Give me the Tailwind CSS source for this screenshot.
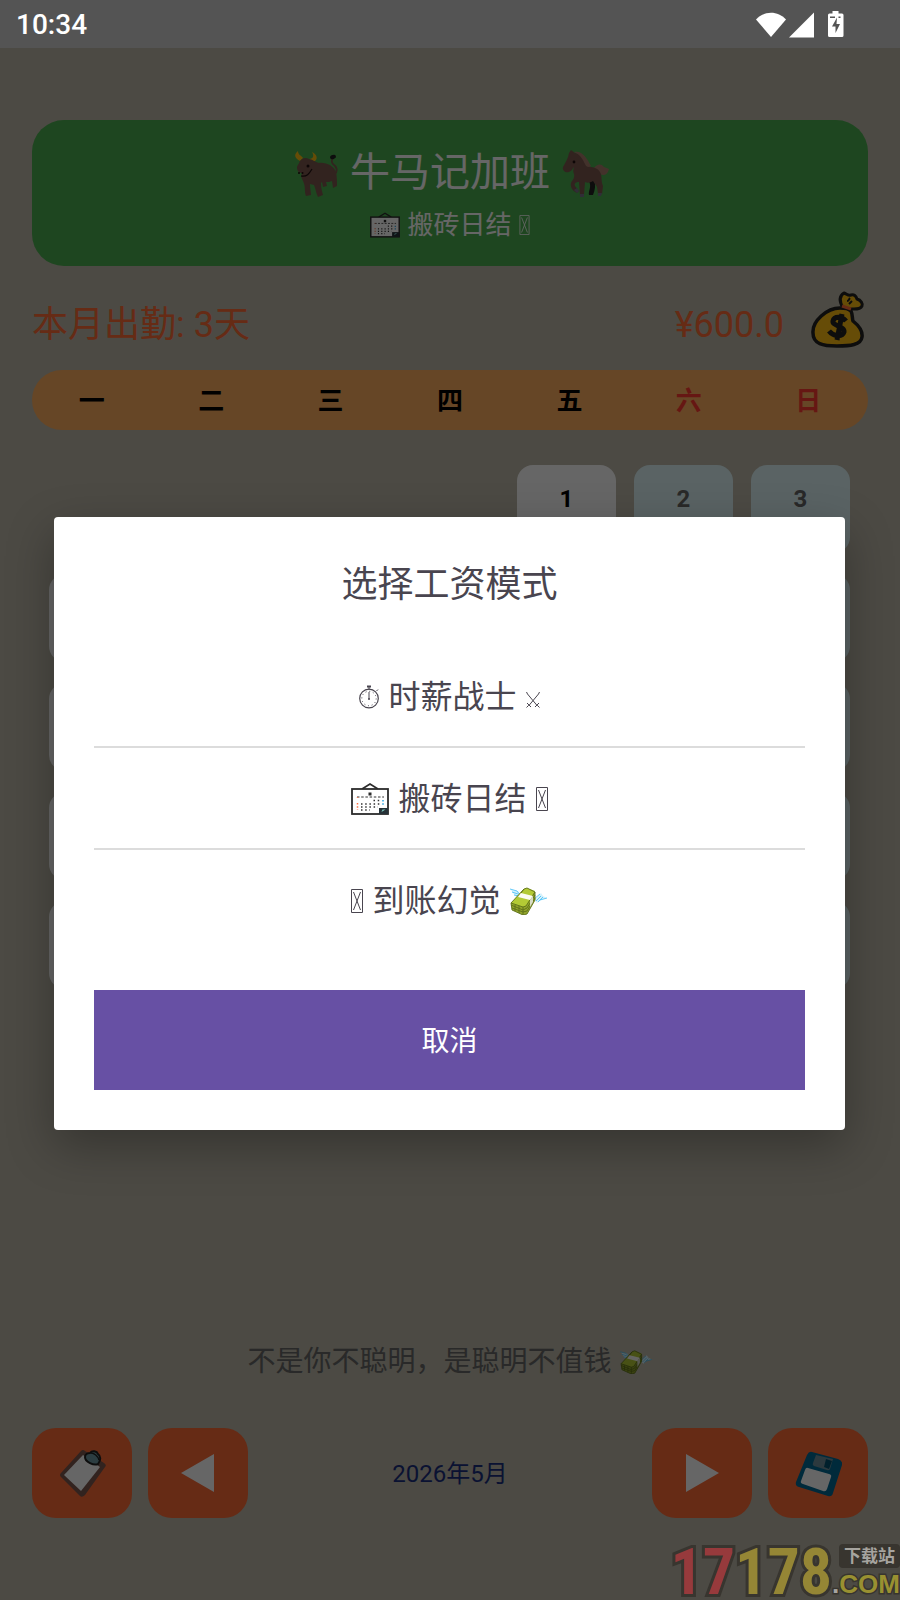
<!DOCTYPE html>
<html lang="zh-CN">
<head>
    <meta charset="UTF-8">
    <meta name="viewport" content="width=device-width, initial-scale=1.0">
    <title>牛马记加班</title>
    <script src="https://cdn.jsdelivr.net/npm/@tailwindcss/browser@4"></script>
</head>

<body class="relative min-h-screen flex flex-col bg-[#bdb9aa] font-['Roboto','Noto_Sans_CJK_SC',sans-serif]">

    <!-- Shared icons -->
    <svg class="hidden" aria-hidden="true">
        <symbol id="calendar" viewBox="0 0 38 32">
            <path d="M11 6 L19 1 L27 6" fill="none" stroke="#2b2b2b" stroke-width="1.6"/>
            <rect x="1" y="6" width="36" height="25" fill="#fff" stroke="#2b2b2b" stroke-width="1.8"/>
            <rect x="17.500" y="9.500" width="3" height="3" fill="#2b2b2b"/>
            <path d="M6 14h27" stroke="#333" stroke-width="1" stroke-dasharray="2.500 1.700"/>
            <path d="M22.500 17.500h8M10 21h21M10 24h17M10 27h9" stroke="#333" stroke-width="1.500" stroke-dasharray="1.500 2.700"/>
            <path d="M6.500 14v.8M6.500 20v7" stroke="#ff7043" stroke-width="1.500" stroke-dasharray="1.500 1.700"/>
            <path d="M32 17v6" stroke="#29a3e0" stroke-width="1.500" stroke-dasharray="1.500 1.700"/>
            <path d="M28 31v-6h9v6z" fill="#263238"/>
            <path d="M30.500 29l1-2.500h3z" fill="#80cbc4"/>
        </symbol>
        <symbol id="tofu" viewBox="0 0 12 24">
            <path d="M.5 .5h11v23H.5zM2.500 3l7 18M9.500 3l-7 18" fill="none" stroke="currentColor" stroke-width="1"/>
        </symbol>
        <symbol id="money" viewBox="0 0 38 28">
            <path d="M1 3l7 1 4 5-2 2-5-2z" fill="#d6f1fb"/>
            <path d="M0 2l7 2 3 4M2 5l6 2M4 8l5 1" fill="none" stroke="#4fc3f7" stroke-width=".9"/>
            <path d="M24 13l5-5 2-2 2 3 4 2-6 1-4 4z" fill="#d6f1fb"/>
            <path d="M24 12l6-5M26 14l5-5M28 15l5-5M30 13l7-2" fill="none" stroke="#4fc3f7" stroke-width=".9"/>
            <path d="M1 16l1 7 11 5 4-1 8-14V5z" fill="#93a52b"/>
            <path d="M1 16L14 2l3-1 8 3-9 15-3 1z" fill="#b3ca35"/>
            <path d="M1 16l12 4 3-1 9-14M1 18l12 5 4-2 8-13M2 21l11 4 4-1 8-13M13 20v8M5 18v6M9 19v7M14 2l-3 4M1 16L14 2l3-1 8 4v8l-8 14-4 1-11-5z" fill="none" stroke="#5d7019" stroke-width=".9"/>
            <path d="M11 6l12 3-3 4-12-3z" fill="#fbfbf2"/>
            <path d="M20 13l3-4v6l-3 5z" fill="#d9dcc8"/>
        </symbol>
    </svg>

    <!-- Status Bar -->
    <header class="relative z-20 h-12 px-4 pt-0.5 flex items-center justify-between bg-[#545454] text-white">
        <span class="text-[28px] leading-none font-medium">10:34</span>
        <svg class="w-[92px] h-7 mr-9" viewBox="0 0 92 28" fill="#fff" role="img" aria-label="网络与电量">
            <path d="M0 8.500C8-.5 22-.5 30 8.500L15 26z"/>
            <path d="M33 26.500L58 1.500v25z"/>
            <path d="M76.500 0h6v2.500H86a1.500 1.500 0 0 1 1.500 1.500v20.500A1.500 1.500 0 0 1 86 26H73.500a1.500 1.500 0 0 1-1.500-1.500V4a1.500 1.500 0 0 1 1.500-1.500h3z"/>
            <path d="M81 6.500l-5 9h3.500v6.500l4.500-9h-3.500z" fill="#545454"/>
            <path d="M74 5.500h5v1.500h-5zM82.500 5.500h2v1.500h-2z" fill="#545454"/>
        </svg>
    </header>

    <!-- Main Content -->
    <main class="flex-1 flex flex-col px-8 pt-18 pb-[82px]">
        <!-- Title Card -->
        <section class="h-[146px] pt-5 rounded-[32px] bg-[#4caf50] text-white flex flex-col items-center">
            <h1 class="flex items-center gap-3 text-[40px] leading-[66px]">
                <svg class="w-12 h-12" viewBox="0 0 48 48" role="img" aria-label="牛">
                    <path d="M44 26c5-4 2-9-1-11-2-2-1-5 0-6" fill="none" stroke="#7d584e" stroke-width="1.800"/>
                    <ellipse cx="43" cy="8" rx="3" ry="2" fill="#212121" transform="rotate(-20 43 8)"/>
                    <path d="M10 12C4 9 4 5 8 2c0 4 3 4 5 7zM19 10c5 0 5-4 3-7 5 2 7 8 1 10z" fill="#ffbf12"/>
                    <path d="M10 12c2-3 6-4 9-2 3 0 6 3 10 4 7-1 15 3 17 9 1 5 1 10 1 14l-4 2-1-7c-2 1-4 1-6 1l1 4-4 1-1-5-1 1c0 5 1 8 2 12l-5 2c-2-4-2-7-4-12l-4-1c0 5 1 8 1 11l-5 1c-2-5 0-9-3-15-2-3-2-6-1-8-3 0-5-2-5-6 1-3 3-4 3-8z" fill="#7d584e"/>
                    <path d="M11 27c6 1 8-2 11-7" fill="none" stroke="#211" stroke-width="1.200"/>
                    <circle cx="18" cy="17" r="1.500" fill="#211"/>
                    <circle cx="9" cy="24" r="1" fill="#211"/>
                    <circle cx="12.500" cy="24" r="1" fill="#211"/>
                </svg>
                <span>牛马记加班</span>
                <svg class="w-12 h-12" viewBox="0 0 48 48" role="img" aria-label="马">
                    <path d="M32 19c3-4 7-5 10-1l5 2c-1 4-3 6-6 6s-4-3-7-4z" fill="#a87e6d"/>
                    <path d="M27 32l5-1c2 5 1 10-1 15h-4c-1-4 3-8 0-14z" fill="#212121"/>
                    <path d="M7 4l2-3 4 3 5 1c5 3 8 8 10 13 5 0 9 2 11 7 1 4 0 8 2 12l-1 8h-4l-1-7-4-6c-3 2-6 2-8 1l-1 13h-4l-1-13c-3 0-5 1-4 4l4 5-2 2c-5-2-7-7-6-10 1-3 4-4 3-9-1-2-1-4 0-7-2 2-2 4-5 5-3 1-7-1-6-5 2-4 5-8 6-14z" fill="#7d584e"/>
                    <path d="M12 3c8-2 13 6 17 14-2 2-5 1-6-2-2-4-4-9-11-12z" fill="#a87e6d"/>
                    <circle cx="12" cy="13" r="1.400" fill="#211"/>
                    <path d="M12 41l3-2 2 3-2 2zM18 45h4v3h-4zM36 44h4l-1 3h-3z" fill="#78748a"/>
                </svg>
            </h1>
            <p class="flex items-center text-[26px] leading-[38px] gap-[7px]">
                <svg class="w-[30px] h-[26px]"><use href="#calendar"/></svg>
                <span>搬砖日结</span>
                <svg class="w-[11px] h-5"><use href="#tofu"/></svg>
            </p>
        </section>

        <!-- Month Stats -->
        <section class="mt-[22px] h-[66px] flex items-center text-[36px] text-[#ff6b35]">
            <span class="pt-2">本月出勤: 3天</span>
            <span class="ml-auto pt-2">¥600.0</span>
            <button class="ml-6 w-[60px] h-[60px] flex items-center justify-center" aria-label="工资模式">
                <svg class="w-[54px] h-[60px]" viewBox="0 0 54 60">
                    <path d="M32 17C28 10 28 5 33 2c3 1 4 3 7 2 3-1 5 1 6 4 4 1 6 5 5 7-2 4-8 3-11 3z" fill="#ffbf12" stroke="#212121" stroke-width="3" stroke-linejoin="round"/>
                    <path d="M36 10c2 0 2-2 3-3M38 13l3-3" stroke="#212121" stroke-width="2" fill="none"/>
                    <path d="M29 17c5 0 9 1 11 3 2 4 1 8 2 10 5 4 10 9 9 16-1 8-12 9-25 9-14 0-24-2-24-13C1 30 16 17 29 17z" fill="#ffbf12" stroke="#212121" stroke-width="3.500"/>
                    <path d="M31 15l9 3" stroke="#ff6b35" stroke-width="3"/>
                    <path d="M35 30c-4-5-12-5-13 0s12 5 11 11c-2 6-11 4-15-1M31 23l-5 26" fill="none" stroke="#212121" stroke-width="5" stroke-linejoin="round"/>
                </svg>
            </button>
        </section>

        <!-- Weekdays -->
        <div class="mt-4 h-[60px] pt-0.5 rounded-full bg-[#ffaf5f] grid grid-cols-7 items-center text-center text-[26px] leading-none font-bold text-black">
            <span>一</span>
            <span>二</span>
            <span>三</span>
            <span>四</span>
            <span>五</span>
            <span class="text-[#ff3b30]">六</span>
            <span class="text-[#ff3b30]">日</span>
        </div>

        <!-- Days of the month -->
        <div id="days" class="mt-[35px] pl-[17px] pr-[18px] grid grid-cols-7 gap-x-[18px] gap-y-[21px]"></div>

        <p class="mt-auto pt-0.5 flex items-center justify-center gap-2 text-[28px] leading-10 text-[#666]">
            <span>不是你不聪明，是聪明不值钱</span>
            <svg class="w-[33px] h-6"><use href="#money"/></svg>
        </p>

        <!-- Bottom Navigation -->
        <nav class="mt-[46px] flex items-center gap-4 text-white">
            <button class="w-[100px] h-[90px] rounded-3xl bg-[#ff6b35] flex items-center justify-center" aria-label="记录">
                <svg class="w-12 h-12" viewBox="0 0 48 48">
                    <path d="M27 2l19 12q3 2 1 4L27 46q-3 3-5 1L3 28q-2-2 0-4L23 2q2-2 4 0z" fill="#7d584e"/>
                    <path d="M25 6l17 12-19 24L6 26z" fill="#fff"/>
                    <path d="M27 8c0-3 3-4 5-4 2-3 7-2 8 1 3 2 3 6 0 10-4 2-13-2-13-7z" fill="#6f9aa3" stroke="#212121" stroke-width="2"/>
                    <path d="M33 4c3 0 7 3 8 7" fill="none" stroke="#212121" stroke-width="1.500"/>
                </svg>
            </button>
            <button class="w-[100px] h-[90px] rounded-3xl bg-[#ff6b35] flex items-center justify-center" aria-label="上个月">
                <svg class="w-[34px] h-[38px]" viewBox="0 0 34 38" fill="currentColor"><path d="M0 19L33 0v38z"/></svg>
            </button>
            <span class="flex-1 pt-0.5 text-center text-2xl text-[#1a2f7e]">2026年5月</span>
            <button class="w-[100px] h-[90px] rounded-3xl bg-[#ff6b35] flex items-center justify-center" aria-label="下个月">
                <svg class="w-[34px] h-[38px]" viewBox="0 0 34 38" fill="currentColor"><path d="M34 19L1 0v38z"/></svg>
            </button>
            <button class="w-[100px] h-[90px] rounded-3xl bg-[#ff6b35] flex items-center justify-center" aria-label="保存">
                <svg class="w-12 h-12" viewBox="0 0 48 48">
                    <path d="M18 3l26 7q5 2 4 6L39 44q-1 4-5 3L5 38q-4-1-3-5L13 6q2-4 5-3z" fill="#006a94"/>
                    <path d="M22 6l17 4-3 10q-1 2-3 1l-13-4q-2-1-1-3z" fill="#6e8f9b"/>
                    <path d="M32 10l6 2-3 8-5-2z" fill="#00516f"/>
                    <path d="M14 19l21 6q3 1 2 3l-4 12q-1 3-4 2L9 35q-3-1-2-3l4-11q1-3 3-2z" fill="#fff"/>
                </svg>
            </button>
        </nav>
    </main>

    <!-- Salary Mode Popup -->
    <div class="absolute inset-0 z-10 pt-12 pb-0.5 pl-[54px] pr-[55px] flex items-center justify-center bg-black/60">
        <div role="dialog" aria-labelledby="modeTitle" class="w-full p-10 rounded bg-white text-[#49454f] shadow-[0_16px_48px_rgba(0,0,0,0.3)]">
            <h2 id="modeTitle" class="pt-0.5 mb-[35px] text-center text-[36px] leading-[52px]">选择工资模式</h2>

            <div class="divide-y-2 divide-[#dcdcdc]">
                <button class="w-full h-[102px] pt-0.5 flex items-center justify-center gap-[9px] text-[32px] leading-none">
                    <svg class="w-5 h-6" viewBox="0 0 20 24" fill="none" stroke="currentColor">
                        <circle cx="10" cy="13.500" r="9.300" stroke-width="1.200"/>
                        <circle cx="10" cy="13.500" r="7.200" stroke-dasharray="1 2.770"/>
                        <path d="M8 1.500h4" stroke-width="2"/>
                        <path d="M10 2v3M10 7v7M17.500 6l1.500-1.500"/>
                        <circle cx="10" cy="14" r="1" fill="currentColor" stroke="none"/>
                    </svg>
                    <span>时薪战士</span>
                    <svg class="w-[14px] h-[22px]" viewBox="0 0 14 22" fill="none" stroke="currentColor" stroke-width="1">
                        <path d="M.5 6l1 2 10 12M13.500 6l-1 2-10 12M1 17l4 4M13 17l-4 4M.5 21.500l2-2M13.500 21.500l-2-2"/>
                    </svg>
                </button>
                <button class="w-full h-[102px] pt-0.5 flex items-center justify-center gap-[9px] text-[32px] leading-none">
                    <svg class="w-[38px] h-8"><use href="#calendar"/></svg>
                    <span>搬砖日结</span>
                    <svg class="w-3 h-6"><use href="#tofu"/></svg>
                </button>
                <button class="w-full h-[100px] pt-0.5 flex items-center justify-center gap-[9px] text-[32px] leading-none">
                    <svg class="w-3 h-6"><use href="#tofu"/></svg>
                    <span>到账幻觉</span>
                    <svg class="w-[38px] h-7"><use href="#money"/></svg>
                </button>
            </div>

            <button class="mt-10 w-full h-[100px] pt-1 bg-[#6750a4] text-white text-[28px]">取消</button>
        </div>
    </div>

    <!-- Download site mark -->
    <div class="absolute right-0 bottom-0 z-30 h-[60px] flex items-end font-bold" aria-label="17178.com">
        <span class="font-['Liberation_Sans_Narrow','Roboto_Condensed','Liberation_Sans'] text-[64px] leading-[54px] text-[#958635] [-webkit-text-stroke:6px_#38352f] [paint-order:stroke_fill]"><span class="text-[#973a3c]">17</span>178</span>
        <div class="flex flex-col items-end">
            <span class="px-[5px] rounded bg-[#38352f] text-[17px] leading-6 text-[#a6a49f]">下载站</span>
            <span class="font-['Liberation_Sans',sans-serif] text-[26px] leading-8 text-[#999031] [-webkit-text-stroke:3px_#38352f] [paint-order:stroke_fill]"><span class="text-[#a6a49f]">.</span>COM</span>
        </div>
    </div>

    <script>
        // May 2026 starts on a Friday; only the days reached so far carry a number
        const days = document.getElementById("days");
        for (let day = 1; day <= 31; day++) {
            const cell = document.createElement("button");
            const weekend = (day + 3) % 7 > 4;
            cell.className = weekend
                ? "h-[88px] pb-5 rounded-2xl bg-[#e0f7fa] text-2xl font-bold text-[#666]"
                : "h-[88px] pb-5 rounded-2xl bg-white text-2xl font-bold text-black";
            if (day === 1) cell.classList.add("col-start-5");
            if (day <= 3) cell.textContent = day;
            else cell.setAttribute("aria-label", day + "日");
            days.appendChild(cell);
        }
    </script>
</body>
</html>
